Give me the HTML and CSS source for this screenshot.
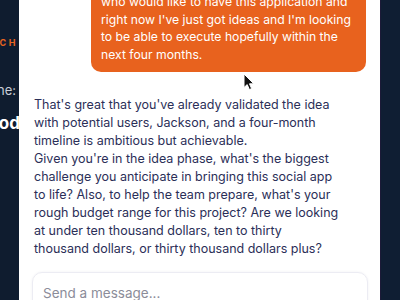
FILE: index.html
```html
<!DOCTYPE html>
<html>
<head>
<meta charset="utf-8">
<link rel="stylesheet" href="styles.css">
</head>
<body>
<div class="app">
  <aside class="sidebar">
    <div class="side-inner">
      <div class="brand">TECH</div>
      <div class="label">Timeline:</div>
      <div class="value">Good</div>
    </div>
  </aside>
  <main class="chat">
    <div class="messages">
      <div class="user-row">
        <div class="bubble">who would like to have this application and right now I've just got ideas and I'm looking to be able to execute hopefully within the next four months.</div>
        <svg class="cursor" width="12" height="18" viewBox="0 0 12 18"><path d="M1 1 L1 14.5 L4.2 11.6 L6.4 16.6 L8.6 15.6 L6.5 10.8 L10.8 10.8 Z" fill="#111" stroke="#fff" stroke-width="1"/></svg>
      </div>
      <div class="reply">That's great that you've already validated the idea with potential users, Jackson, and a four-month timeline is ambitious but achievable.<br>Given you're in the idea phase, what's the biggest challenge you anticipate in bringing this social app to&nbsp;life? Also, to help the team prepare, what's your rough budget range for this project? Are we looking at under ten thousand dollars, ten to thirty thousand&nbsp;dollars, or thirty thousand dollars plus?</div>
    </div>
    <div class="composer">
      <div class="input">Send a message...</div>
    </div>
  </main>
  <aside class="rightbar"></aside>
</div>
</body>
</html>
```
FILE: styles.css
```css
html, body {
  margin: 0;
  padding: 0;
  height: 300px;
  overflow: hidden;
  background: #0f1e33;
}
.app {
  display: flex;
  width: 400px;
  height: 330px;
  font-family: Inter, "Noto Sans", sans-serif;
}
.sidebar {
  width: 19px;
  flex: none;
  background: #0f1c2f;
  overflow: hidden;
  display: flex;
  justify-content: flex-end;
}
.side-inner {
  flex: none;
  width: 160px;
  padding-top: 37px;
  text-align: right;
}
.brand {
  color: #e8641f;
  font-size: 9px;
  font-weight: 700;
  letter-spacing: 2.6px;
  margin-right: 1px;
  line-height: 12px;
}
.label {
  color: #c9ced8;
  font-size: 13px;
  line-height: 16px;
  margin-top: 33px;
  margin-right: 3px;
}
.value {
  color: #ffffff;
  font-size: 17px;
  font-weight: 700;
  line-height: 20px;
  margin-top: 15px;
  margin-right: -1px;
}
.chat {
  width: 361px;
  flex: none;
  background: #ffffff;
  border-right: 1px solid #1c1a38;
  display: flex;
  flex-direction: column;
}
.messages {
  flex: 1;
  min-height: 0;
  overflow: hidden;
  display: flex;
  flex-direction: column;
  justify-content: flex-end;
  padding: 0 14px 0 15px;
}
.user-row {
  display: flex;
  justify-content: flex-end;
  position: relative;
}
.bubble {
  width: 257px;
  background: #e8621e;
  color: #ffffff;
  font-size: 12.2px;
  line-height: 17.5px;
  padding: 8px 8px 9px 10px;
  border-radius: 10px;
}
.cursor {
  position: absolute;
  left: 209px;
  top: 100%;
  margin-top: 1px;
}
.reply {
  margin-top: 24px;
  color: #2b2f58;
  font-size: 12.5px;
  line-height: 18px;
  width: 308px;
}
.composer {
  flex: none;
  padding: 14px 12px 11px 13px;
}
.input {
  height: 47px;
  border: 1px solid #ececf3;
  border-radius: 10px;
  box-shadow: 0 0 3px rgba(40, 40, 90, 0.06);
  color: #8b8c99;
  font-size: 13.5px;
  line-height: 16px;
  padding: 12px 10px;
  box-sizing: border-box;
}
```
